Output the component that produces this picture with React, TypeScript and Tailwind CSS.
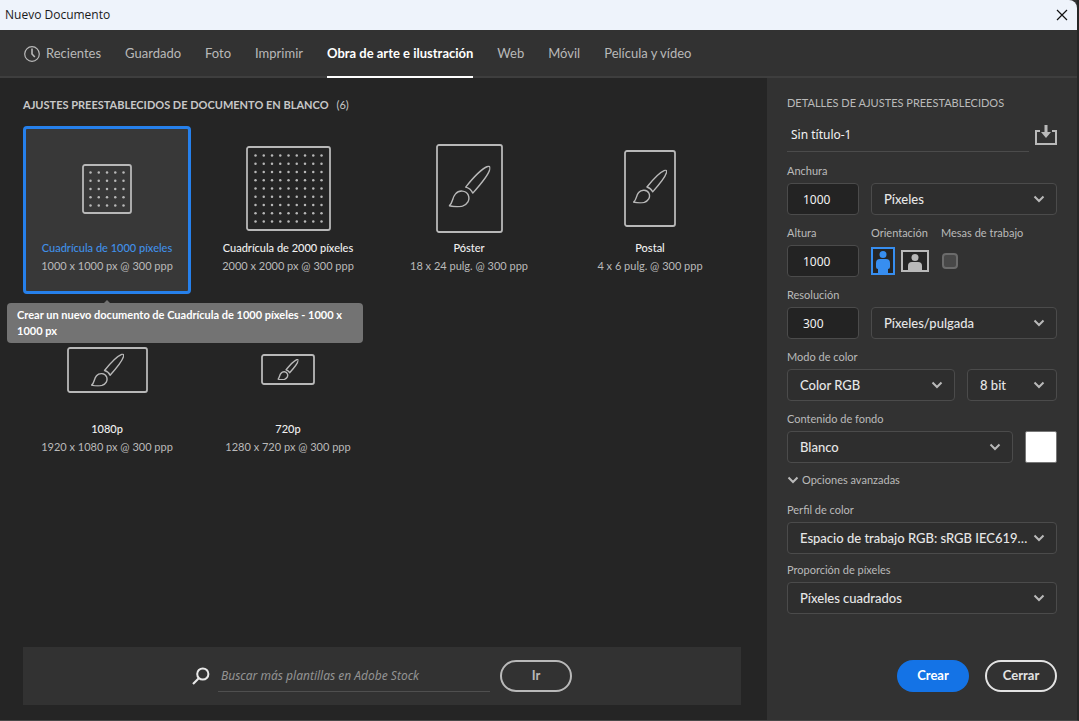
import React, { useState } from "react";
import { clsx } from "clsx";

const tabs = ["Recientes", "Guardado", "Foto", "Imprimir", "Obra de arte e ilustración", "Web", "Móvil", "Película y vídeo"];

type Preset = {
    name: string;
    size: string;
    width: number;
    height: number;
    dots?: number;
    brush?: number;
    lift?: number;
};

const presets: Preset[] = [
    { name: "Cuadrícula de 1000 píxeles", size: "1000 x 1000 px @ 300 ppp", width: 50, height: 50, dots: 5 },
    { name: "Cuadrícula de 2000 píxeles", size: "2000 x 2000 px @ 300 ppp", width: 85, height: 85, dots: 9 },
    { name: "Póster", size: "18 x 24 pulg. @ 300 ppp", width: 67, height: 89, brush: 42, lift: 2 },
    { name: "Postal", size: "4 x 6 pulg. @ 300 ppp", width: 52, height: 77, brush: 34, lift: 2 },
    { name: "1080p", size: "1920 x 1080 px @ 300 ppp", width: 81, height: 46, brush: 33, lift: 0 },
    { name: "720p", size: "1280 x 720 px @ 300 ppp", width: 54, height: 31, brush: 21, lift: 0 },
];

const PresetArt = ({ preset }: { preset: Preset }) => {
    const { width, height, dots = 0, brush, lift = 0 } = preset;
    const pitch = 8.25;
    const startX = (width - pitch * (dots - 1)) / 2;
    const startY = (height - pitch * (dots - 1)) / 2;

    return (
        <svg width={width} height={height} className="text-[#b8b8b8]" fill="none" stroke="currentColor" aria-hidden="true">
            <rect x="1" y="1" width={width - 2} height={height - 2} rx="2" strokeWidth="1.8" />
            {Array.from({ length: dots * dots }, (_, i) => (
                <circle
                    key={i}
                    cx={startX + (i % dots) * pitch}
                    cy={startY + Math.floor(i / dots) * pitch}
                    r="1.25"
                    fill="currentColor"
                    stroke="none"
                />
            ))}
            {brush && (
                <svg
                    x={(width - brush) / 2}
                    y={(height - brush) / 2 - lift}
                    width={brush}
                    height={brush}
                    viewBox="0 0 42 42"
                    strokeWidth="1.4"
                    strokeLinejoin="round"
                >
                    <path vectorEffect="non-scaling-stroke" d="M17.2 21.6C24 13 33 3.5 39 1c2.300-.8 2.900.6 2.300 3C39.500 10.500 32 19 24.300 27.600c-1.400-3.200-3.600-5-7.100-6z" />
                    <path vectorEffect="non-scaling-stroke" d="M.8 40.200C5 36.500 3.400 32.500 7 28.400c3.500-4.200 10.500-3.600 12.700 1 2.200 5.200-1 9.600-5.700 11.200-4.500 1.300-9 .7-13.200-.4z" />
                </svg>
            )}
        </svg>
    );
};

const Chevron = ({ className }: { className?: string }) => (
    <svg viewBox="0 0 12 8" className={clsx("h-2 w-3", className)} fill="none" stroke="currentColor" strokeWidth="2" aria-hidden="true">
        <path d="M1.500 1.500 6 6l4.500-4.500" />
    </svg>
);

const Dropdown = ({ id, value, label }: { id: string; value: string; label?: string }) => (
    <div className="relative min-w-0 flex-1">
        <select
            id={id}
            aria-label={label}
            className="block h-8 w-full appearance-none truncate rounded border border-[#4b4b4b] bg-[#2e2e2e] pt-0.5 pr-[26px] pl-3 text-[13px] font-medium text-[#e6e6e6]"
        >
            <option>{value}</option>
        </select>
        <Chevron className="pointer-events-none absolute right-3 top-3 text-[#b9b9b9]" />
    </div>
);

const Field = ({ id, label, children }: { id: string; label: string; children: React.ReactNode }) => (
    <div className="flex flex-col gap-1">
        <label htmlFor={id} className="text-[11px] leading-4 text-[#bababa]">
            {label}
        </label>
        <div className="flex gap-3">{children}</div>
    </div>
);

const NumberBox = ({ id, value }: { id: string; value: string }) => (
    <input
        id={id}
        defaultValue={value}
        className="h-8 w-[72px] shrink-0 rounded border border-[#4b4b4b] bg-[#232323] pl-[15px] font-['Noto_Sans','Liberation_Sans',sans-serif] text-xs text-[#f2f2f2]"
    />
);

const PresetCard = ({ preset, selected, onSelect }: { preset: Preset; selected: boolean; onSelect: () => void }) => (
    <button
        type="button"
        aria-pressed={selected}
        onClick={onSelect}
        className={clsx(
            "flex h-[168px] w-full flex-col items-center rounded border-3 pt-[9px]",
            selected ? "border-[#2680eb] bg-[#383838]" : "border-transparent"
        )}
    >
        <span className="flex h-[101px] items-center">
            <PresetArt preset={preset} />
        </span>
        <span className={clsx("whitespace-nowrap text-[11px] leading-[18px] font-medium", selected ? "text-[#4090e8]" : "text-[#f0f0f0]")}>
            {preset.name}
        </span>
        <span className="whitespace-nowrap text-[11px] leading-[18px] text-[#bababa]">{preset.size}</span>
    </button>
);

export default function App() {
    const [tab, setTab] = useState(4);
    const [selected, setSelected] = useState(0);
    const [landscape, setLandscape] = useState(false);

    return (
        <div className="flex min-h-screen flex-col border-r-2 border-b border-r-[#262626] border-b-[#484848] bg-[#323232] font-['Lato','Noto_Sans',sans-serif]">
            <header className="flex h-[30px] items-center justify-between rounded-tr-lg bg-[#eef3fb] pr-[9px] pl-[5px]">
                <h1 className="font-['Open_Sans','Noto_Sans',sans-serif] text-xs text-[#1a1a1a]">Nuevo Documento</h1>
                <button type="button" aria-label="Cerrar ventana" className="text-[#111]">
                    <svg width="12" height="12" viewBox="0 0 12 12" stroke="currentColor" strokeWidth="1.2" aria-hidden="true">
                        <path d="m1 1 10 10M11 1 1 11" />
                    </svg>
                </button>
            </header>

            <nav className="flex h-12 gap-6 border-b-2 border-[#3e3e3e] px-6">
                {tabs.map((name, i) => (
                    <button
                        key={name}
                        type="button"
                        onClick={() => setTab(i)}
                        className={clsx(
                            "-mb-0.5 flex items-center gap-[6px] whitespace-nowrap border-b-2 pt-0.5 text-[13px]",
                            i === tab ? "border-white font-bold text-white" : "border-transparent text-[#b9b9b9]"
                        )}
                    >
                        {i === 0 && (
                            <svg width="16" height="16" viewBox="0 0 16 16" fill="none" stroke="currentColor" aria-hidden="true">
                                <circle cx="8" cy="8" r="7.300" strokeWidth="1.200" />
                                <path d="M8 2.500V8l2.800 3" strokeWidth="1.600" />
                            </svg>
                        )}
                        {name}
                    </button>
                ))}
            </nav>

            <div className="flex flex-1">
                <main className="flex min-w-0 flex-1 flex-col bg-[#252525] pt-[19px] pr-[26px] pb-[15px] pl-[23px]">
                    <h2 className="text-[11px] leading-4 text-[#c8c8c8]">
                        <span className="mr-2 font-bold">AJUSTES PREESTABLECIDOS DE DOCUMENTO EN BLANCO</span>
                        (6)
                    </h2>

                    <div className="mt-[13px] grid grid-cols-[repeat(auto-fill,168px)] gap-[13px]">
                        {presets.map((preset, i) => (
                            <div key={preset.name} className="relative">
                                <PresetCard preset={preset} selected={i === selected} onSelect={() => setSelected(i)} />
                                {i === 0 && selected === 0 && (
                                    <div role="tooltip" className="absolute top-[177px] -left-4 z-10 w-[356px] rounded bg-[#737373] px-[10px] py-1 text-[11px] leading-4 font-bold text-white">
                                        <svg width="8" height="4" className="absolute -top-[3px] left-24 text-[#737373]" fill="currentColor" aria-hidden="true">
                                            <path d="M4 0 8 4H0z" />
                                        </svg>
                                        Crear un nuevo documento de Cuadrícula de 1000 píxeles - 1000 x 1000 px
                                    </div>
                                )}
                            </div>
                        ))}
                    </div>

                    <form className="mt-auto flex h-[58px] items-center justify-center bg-[#323232]" onSubmit={(e) => e.preventDefault()}>
                        <svg width="18" height="18" viewBox="0 0 18 18" fill="none" stroke="#e8e8e8" strokeWidth="2" aria-hidden="true">
                            <circle cx="10.800" cy="7" r="5.600" />
                            <path d="m7 11-6 6" strokeWidth="2.200" />
                        </svg>
                        <input
                            type="search"
                            aria-label="Buscar más plantillas en Adobe Stock"
                            placeholder="Buscar más plantillas en Adobe Stock"
                            className="ml-2 h-8 w-[272px] border-b border-[#4f4f4f] bg-transparent px-[3px] font-['Noto_Sans','Liberation_Sans',sans-serif] text-xs italic text-white placeholder:text-[#939393]"
                        />
                        <button type="submit" className="ml-[10px] h-8 w-[72px] rounded-full border-2 border-[#b9b9b9] text-[13px] font-bold text-[#b9b9b9]">
                            Ir
                        </button>
                    </form>
                </main>

                <aside className="flex w-[310px] shrink-0 flex-col px-5 pt-[17px] pb-7">
                    <h2 className="text-[11px] leading-4 text-[#bababa]">DETALLES DE AJUSTES PREESTABLECIDOS</h2>
                    <div className="mt-[7px] flex items-center gap-[6px]">
                        <input
                            aria-label="Nombre del documento"
                            defaultValue="Sin título-1"
                            className="h-[34px] min-w-0 flex-1 border-b border-[#4b4b4b] bg-transparent px-1 font-['Noto_Sans','Liberation_Sans',sans-serif] text-xs text-[#f2f2f2]"
                        />
                        <button type="button" aria-label="Guardar ajuste preestablecido" className="text-[#b9b9b9]">
                            <svg width="22" height="20" viewBox="0 0 22 20" aria-hidden="true">
                                <path d="M5 6H1v13h20V6h-4" fill="none" stroke="currentColor" strokeWidth="2" />
                                <path d="M9.500 0h3v7H16l-5 6-5-6h3.500z" fill="currentColor" />
                            </svg>
                        </button>
                    </div>

                    <div className="mt-[11px] flex flex-col gap-[10px]">
                        <Field id="anchura" label="Anchura">
                            <NumberBox id="anchura" value="1000" />
                            <Dropdown id="unidad" label="Unidad" value="Píxeles" />
                        </Field>

                        <div className="flex gap-3">
                            <Field id="altura" label="Altura">
                                <NumberBox id="altura" value="1000" />
                            </Field>
                            <div role="group" aria-labelledby="orientacion" className="flex flex-col gap-1">
                                <span id="orientacion" className="text-[11px] leading-4 text-[#bababa]">
                                    Orientación
                                </span>
                                <div className="flex h-8 items-center gap-[6px]">
                                    <button
                                        type="button"
                                        aria-label="Vertical"
                                        aria-pressed={!landscape}
                                        onClick={() => setLandscape(false)}
                                        className={landscape ? "text-[#b9b9b9]" : "text-[#378ef0]"}
                                    >
                                        <svg width="24" height="28" viewBox="0 0 24 28" fill="currentColor" aria-hidden="true">
                                            <rect x="1" y="1" width="22" height="26" fill="#252525" stroke="currentColor" strokeWidth="2" />
                                            <circle cx="12" cy="7.500" r="3.500" />
                                            <path d="M9 12h6q4 0 4 4v4q0 2-2 2v5H7v-5q-2 0-2-2v-4q0-4 4-4z" />
                                        </svg>
                                    </button>
                                    <button
                                        type="button"
                                        aria-label="Horizontal"
                                        aria-pressed={landscape}
                                        onClick={() => setLandscape(true)}
                                        className={landscape ? "text-[#378ef0]" : "text-[#b9b9b9]"}
                                    >
                                        <svg width="28" height="22" viewBox="0 0 28 22" fill="currentColor" aria-hidden="true">
                                            <rect x="1" y="1" width="26" height="20" fill="#252525" stroke="currentColor" strokeWidth="2" />
                                            <circle cx="14" cy="7.500" r="3.500" />
                                            <path d="M11 12h6q4 0 4 4v5H7v-5q0-4 4-4z" />
                                        </svg>
                                    </button>
                                </div>
                            </div>
                            <div className="flex flex-col gap-1">
                                <label htmlFor="mesas" className="text-[11px] leading-4 text-[#bababa]">
                                    Mesas de trabajo
                                </label>
                                <div className="flex h-8 items-center">
                                    <input
                                        id="mesas"
                                        type="checkbox"
                                        className="ml-px size-4 appearance-none rounded border-2 border-[#6b6b6b] bg-[#484848] checked:bg-[#378ef0]"
                                    />
                                </div>
                            </div>
                        </div>

                        <Field id="resolucion" label="Resolución">
                            <NumberBox id="resolucion" value="300" />
                            <Dropdown id="unidad-resolucion" label="Unidad de resolución" value="Píxeles/pulgada" />
                        </Field>

                        <Field id="modo" label="Modo de color">
                            <Dropdown id="modo" value="Color RGB" />
                            <div className="flex w-[90px]">
                                <Dropdown id="bits" label="Profundidad de bits" value="8 bit" />
                            </div>
                        </Field>

                        <Field id="fondo" label="Contenido de fondo">
                            <Dropdown id="fondo" value="Blanco" />
                            <button type="button" aria-label="Color de fondo" className="size-8 rounded-xs border border-[#777] bg-white" />
                        </Field>
                    </div>

                    <div className="mt-[7px] flex flex-col gap-2">
                        <button type="button" className="mb-1 flex h-5 items-center gap-[3px] text-[11px] text-[#bababa]">
                            <Chevron />
                            Opciones avanzadas
                        </button>
                        <Field id="perfil" label="Perfil de color">
                            <Dropdown id="perfil" value="Espacio de trabajo RGB: sRGB IEC61966-2.1" />
                        </Field>
                        <Field id="proporcion" label="Proporción de píxeles">
                            <Dropdown id="proporcion" value="Píxeles cuadrados" />
                        </Field>
                    </div>

                    <div className="mt-auto flex justify-end gap-4">
                        <button type="button" className="h-8 w-[72px] rounded-full bg-[#1473e6] text-[13px] font-bold text-white">
                            Crear
                        </button>
                        <button type="button" className="h-8 w-[72px] rounded-full border-2 border-[#e3e3e3] text-[13px] font-bold text-[#e3e3e3]">
                            Cerrar
                        </button>
                    </div>
                </aside>
            </div>
        </div>
    );
}
